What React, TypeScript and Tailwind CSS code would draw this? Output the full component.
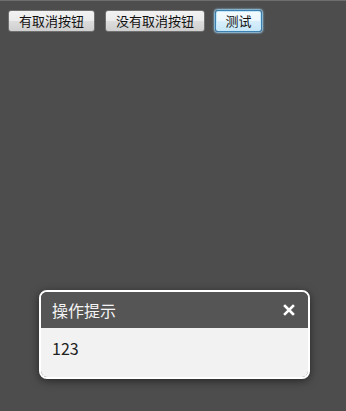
import React from "react";

export default function App() {
  const btn =
    "h-[22px] px-0 text-[13px] leading-[20px] text-[#111] font-normal rounded-[3px] border border-[#707070] bg-[linear-gradient(#f2f2f2,#ebebeb_50%,#dddddd_50%,#cfcfcf)]";
  return (
    <div
      className="w-[346px] h-[411px] bg-[#4d4d4d] border-t border-[#6e6e6e] flex flex-col"
      style={{ fontFamily: '"Noto Sans CJK SC", "Liberation Sans", sans-serif' }}
    >
      <div className="flex items-start pt-[9px] pl-[8px] gap-[10px]">
        <button className={btn + " w-[87px]"}>有取消按钮</button>
        <button className={btn + " w-[100px]"}>没有取消按钮</button>
        <button className="h-[22px] w-[47px] px-0 text-[13px] leading-[18px] text-[#111] rounded-[3px] border border-[#3c7fb1] shadow-[0_0_2px_1px_#9fd5f5,inset_0_0_0_1px_#c4e8fa] bg-[linear-gradient(#f4fbfe,#ebf7fd_50%,#d8effc_50%,#c6e6f7)]">
          测试
        </button>
      </div>
      <div className="flex-1" />
      <div className="pl-[39px] pb-[32px]">
        <div className="w-[271px] rounded-[8px] border-2 border-white overflow-hidden shadow-[0_2px_8px_rgba(0,0,0,0.5)]">
          <div className="h-[36px] bg-[#555555] flex items-center justify-between pl-[11px] pr-[11px]">
            <span className="text-[16px] text-[#f4f4f4] leading-none">操作提示</span>
            <svg width="12" height="12" viewBox="0 0 12 12" className="mr-[2px]">
              <path d="M2 2 L10 10 M10 2 L2 10" stroke="#ffffff" strokeWidth="2.6" strokeLinecap="square" />
            </svg>
          </div>
          <div className="h-[49px] bg-[#f2f2f2] pl-[11px] pt-[10px] text-[16px] leading-[20px] text-[#222]">
            123
          </div>
        </div>
      </div>
    </div>
  );
}
